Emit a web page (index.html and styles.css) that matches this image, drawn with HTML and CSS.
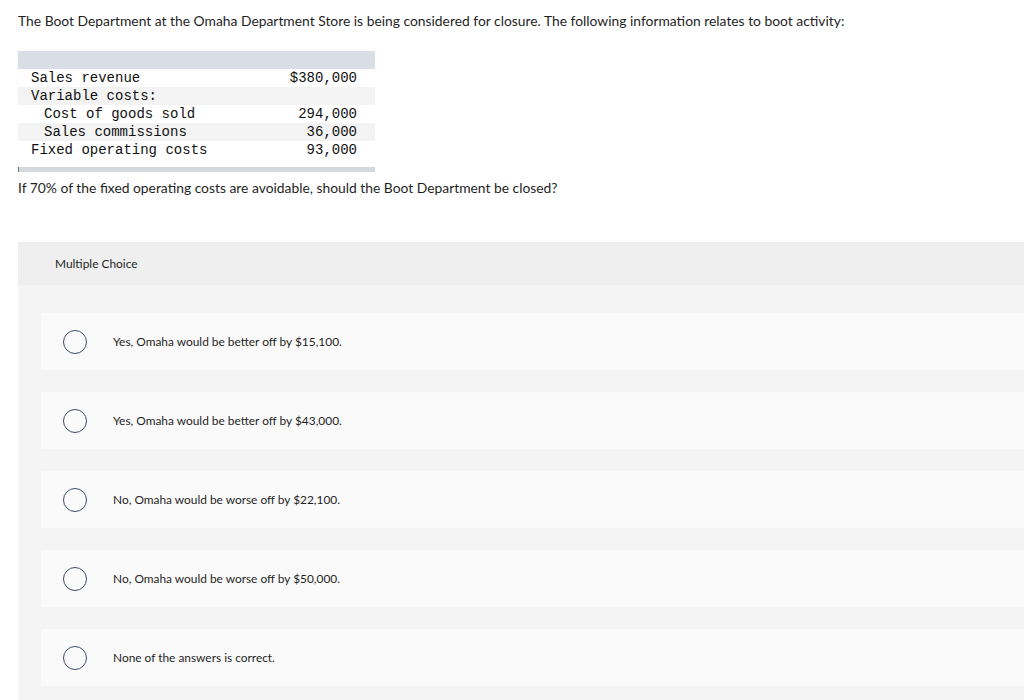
FILE: index.html
```html
<!DOCTYPE html>
<html lang="en">
<head>
  <meta charset="UTF-8">
  <title>Boot Department</title>
  <link rel="stylesheet" href="styles.css">
</head>
<body>
  <div class="page">
    <p class="intro">The Boot Department at the Omaha Department Store is being considered for closure. The following information relates to boot activity:</p>

    <div class="data-table">
      <div class="table-head"></div>
      <div class="row"><span>Sales revenue</span><span>$380,000</span></div>
      <div class="row"><span>Variable costs:</span><span></span></div>
      <div class="row indent"><span>Cost of goods sold</span><span>294,000</span></div>
      <div class="row indent"><span>Sales commissions</span><span>36,000</span></div>
      <div class="row"><span>Fixed operating costs</span><span>93,000</span></div>
      <div class="table-foot"></div>
    </div>

    <p class="question">If 70% of the fixed operating costs are avoidable, should the Boot Department be closed?</p>
  </div>

  <div class="choices">
    <div class="choices-head">Multiple Choice</div>
    <div class="choices-body">
      <label class="option"><span class="radio"></span><span>Yes, Omaha would be better off by $15,100.</span></label>
      <label class="option"><span class="radio"></span><span>Yes, Omaha would be better off by $43,000.</span></label>
      <label class="option"><span class="radio"></span><span>No, Omaha would be worse off by $22,100.</span></label>
      <label class="option"><span class="radio"></span><span>No, Omaha would be worse off by $50,000.</span></label>
      <label class="option"><span class="radio"></span><span>None of the answers is correct.</span></label>
    </div>
  </div>
</body>
</html>
```

FILE: styles.css
```css
body {
  margin: 0;
  padding: 0;
  font-family: 'Lato', 'Liberation Sans', sans-serif;
  color: #1f1f1f;
  background: #fff;
  overflow: hidden;
}

.page {
  padding: 0 18px;
}

.intro {
  margin: 0;
  padding-top: 11px;
  font-size: 13.85px;
  line-height: 20px;
}

.data-table {
  width: 357px;
  margin-top: 20px;
  font-family: 'Liberation Mono', monospace;
  font-size: 14px;
  color: #111;
}

.table-head {
  height: 18px;
  background: #d9dde6;
}

.row {
  display: flex;
  justify-content: space-between;
  height: 18px;
  line-height: 18px;
  padding: 0 18px 0 13px;
}

.row:nth-child(odd) {
  background: #f3f3f3;
}

.row.indent span:first-child {
  padding-left: 13px;
}

.table-foot {
  height: 5px;
  margin-top: 8px;
  background: #d3d8e1;
  border-left: 1px solid #777;
}

.question {
  margin: 6px 0 0;
  font-size: 13.85px;
  line-height: 20px;
}

.choices {
  margin: 44px 0 0 18px;
  background: #f4f4f4;
}

.choices-head {
  height: 43px;
  line-height: 43px;
  padding-left: 37px;
  font-size: 11.9px;
  background: #efefef;
}

.choices-body {
  display: flex;
  flex-direction: column;
  gap: 22px;
  padding: 28px 0 20px 23px;
}

.option {
  display: flex;
  align-items: center;
  height: 57px;
  padding-left: 22px;
  background: #fafafa;
  font-size: 11.9px;
}

.radio {
  width: 22px;
  height: 22px;
  border: 1px solid #3b4a6b;
  border-radius: 50%;
  margin-right: 26px;
  flex-shrink: 0;
}
```
